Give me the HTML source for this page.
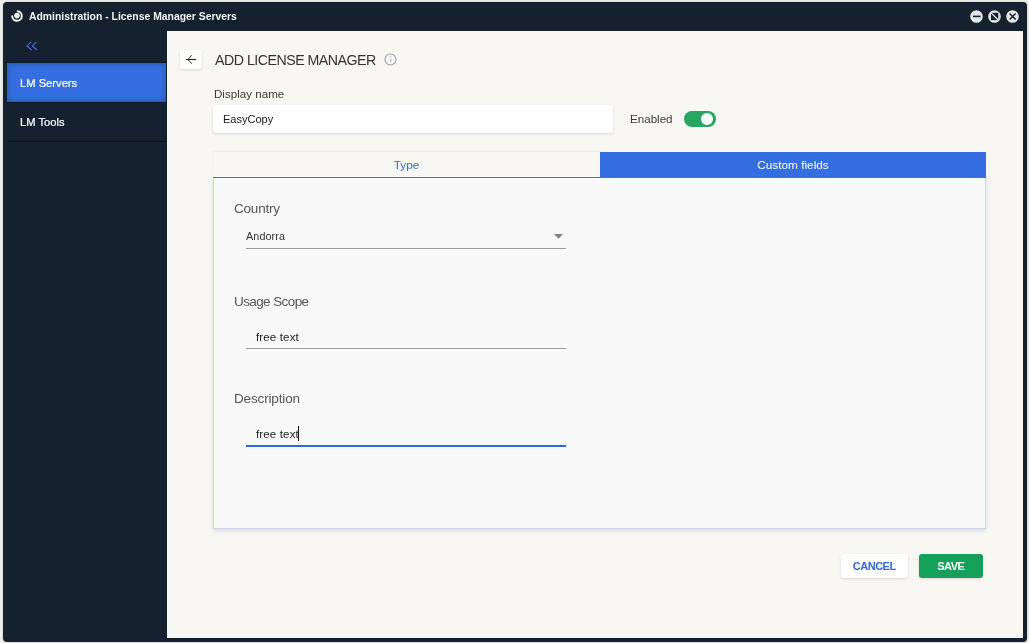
<!DOCTYPE html>
<html><head><meta charset="utf-8">
<style>
*{box-sizing:border-box;margin:0;padding:0}
body{will-change:transform}
html,body{width:1029px;height:643px;overflow:hidden;background:#f3f1ed;font-family:"Liberation Sans",sans-serif}
.abs{position:absolute}
.win{position:absolute;left:3px;top:2px;width:1023.6px;height:639.6px;background:#15212e;border-radius:4px;box-shadow:0 0 3px rgba(0,0,0,.22)}
.title{position:absolute;left:26px;top:9px;color:#f2f2f2;font-weight:bold;font-size:10.4px;line-height:12px;white-space:nowrap}
.logo{position:absolute;left:6.8px;top:7.2px}
.wbtn{position:absolute;top:8px;width:13px;height:13px}
.content{position:absolute;left:167px;top:31px;width:856px;height:607px;background:#f8f7f4}
.sb-back{position:absolute;left:25.5px;top:41px}
.nav{position:absolute;left:7px;width:159px;height:39px;color:#fff;font-size:11.2px;padding-left:13px;line-height:41px;-webkit-text-stroke:0.2px #fff}
.nav.active{top:63px;background:#356ee0;box-shadow:inset 0 0 6px rgba(0,0,0,.28), 0 -1px 0 #0e1620, 0 1px 0 #0e1620}
.nav.t2{top:102px}
.sep{position:absolute;left:7px;top:141px;width:159px;height:1px;background:#121416}
.backbtn{position:absolute;left:180px;top:50px;width:22px;height:19px;background:#fff;border-radius:2px;box-shadow:0 1px 3px rgba(0,0,0,.13)}
.h1{position:absolute;left:215px;top:51.5px;font-size:14.2px;letter-spacing:-0.5px;line-height:17px;color:#333;white-space:nowrap}
.lbl{position:absolute;font-size:11.6px;line-height:14px;color:#3a3a3a;white-space:nowrap}
.input{position:absolute;left:213px;top:105px;width:400px;height:28px;background:#fff;border-radius:3px;box-shadow:0 1px 3px rgba(0,0,0,.12)}
.toggle{position:absolute;left:684px;top:111px;width:32px;height:16px;border-radius:8px;background:#29a562}
.knob{position:absolute;left:17.2px;top:2px;width:12px;height:12px;border-radius:50%;background:#fff}
.tabs{position:absolute;left:213px;top:152px;width:773px;height:26px}
.tab1{position:absolute;left:0;top:0;width:387px;height:25px;background:#f8f7f3;color:#3169d9;font-size:11.8px;line-height:27px;text-align:center;box-shadow:0 -1px 2px rgba(0,0,0,.05)}
.tab2{position:absolute;left:387px;top:0;width:386px;height:25px;background:#346ee0;color:#fff;font-size:11.8px;line-height:27px;text-align:center}
.tabline{position:absolute;left:0;top:25px;width:773px;height:1px;background:#3b72e0}
.panel{position:absolute;left:213px;top:178px;width:773px;height:351px;background:#f9f9f9;border:1px solid #c9d7f5;border-top:none;box-shadow:0 2px 4px rgba(0,0,0,.12)}
.flabel{position:absolute;left:234px;font-size:13.5px;line-height:16px;color:#555;white-space:nowrap}
.fval{position:absolute;font-size:11.5px;line-height:14px;color:#222;white-space:nowrap}
.uline{position:absolute;left:246px;width:320px;height:1px;background:#9a9a9a}
.btn{position:absolute;top:554px;height:24px;border-radius:3px;font-weight:bold;font-size:11px;line-height:25px;text-align:center;letter-spacing:-0.5px;text-indent:-0.5px}
.cancel{left:841px;width:67px;background:#fff;color:#3169d9;box-shadow:0 1px 3px rgba(0,0,0,.12)}
.save{left:919px;width:64px;background:#14a05a;color:#fff;box-shadow:0 1px 3px rgba(0,0,0,.12)}
</style></head><body>
<div class="win">
  <svg class="logo" width="14" height="14" viewBox="0 0 14 14">
    <path d="M2.2 7.3 A4.8 4.8 0 1 0 7.8 2.3" fill="none" stroke="#f2f2f2" stroke-width="2" stroke-linecap="round"/>
    <circle cx="7" cy="6.6" r="2.8" fill="#f2f2f2"/>
  </svg>
  <div class="title">Administration - License Manager Servers</div>
  <svg class="wbtn" style="left:967px" viewBox="0 0 13 13"><circle cx="6.5" cy="6.5" r="6.3" fill="#e4e5e7"/><rect x="3" y="5.6" width="7.6" height="1.6" fill="#15212e"/></svg>
  <svg class="wbtn" style="left:985px" viewBox="0 0 13 13"><circle cx="6.5" cy="6.5" r="6.3" fill="#e4e5e7"/><rect x="3" y="2.8" width="7.3" height="7.3" fill="#15212e"/><path d="M2.6 2.4 L10.7 10.5" stroke="#e4e5e7" stroke-width="1.3"/></svg>
  <svg class="wbtn" style="left:1003px" viewBox="0 0 13 13"><circle cx="6.5" cy="6.5" r="6.3" fill="#e4e5e7"/><path d="M3.6 3.5 L9.6 9.5 M9.6 3.5 L3.6 9.5" stroke="#15212e" stroke-width="1.5"/></svg>
</div>
<svg class="sb-back" width="13" height="10" viewBox="0 0 13 10"><path d="M5.2 0.9 L1 4.9 L5.6 9 M10.4 0.9 L6.4 4.9 L11 9" fill="none" stroke="#3b70e0" stroke-width="1.2"/></svg>
<div class="nav active">LM Servers</div>
<div class="nav t2">LM Tools</div>
<div class="sep"></div>
<div class="content"></div>

<div class="backbtn"><svg width="22" height="19" viewBox="0 0 22 19"><path d="M16.2 9.5 H6" fill="none" stroke="#1e1e1e" stroke-width="1.1"/><path d="M11.7 5.2 L8 9.5 L11.7 13.8" fill="none" stroke="#1e1e1e" stroke-width="0.9"/></svg></div>
<div class="h1">ADD LICENSE MANAGER</div>
<svg class="abs" style="left:383.8px;top:52.9px" width="13" height="13" viewBox="0 0 13 13"><circle cx="6.5" cy="6.5" r="5.5" fill="none" stroke="#99a1ae" stroke-width="1.1"/><rect x="6" y="6.1" width="1.2" height="3.2" fill="#b0b6c0"/><rect x="6" y="3.3" width="1.2" height="1.4" fill="#b8bdc6"/></svg>
<div class="lbl" style="left:214px;top:87px">Display name</div>
<div class="input"></div>
<div class="fval" style="left:223px;top:112px;font-size:11px;color:#1a1a1a">EasyCopy</div>
<div class="lbl" style="left:630px;top:112px">Enabled</div>
<div class="toggle"><div class="knob"></div></div>

<div class="panel"></div>
<div class="tabs">
  <div class="tab1">Type</div>
  <div class="tab2">Custom fields</div>
  <div class="tabline"></div>
</div>

<div class="flabel" style="top:200.5px;letter-spacing:-0.2px">Country</div>
<div class="fval" style="left:246px;top:228.8px;font-size:10.8px;color:#333;letter-spacing:0.1px">Andorra</div>
<svg class="abs" style="left:554px;top:233.5px" width="9" height="5" viewBox="0 0 9 5"><path d="M0 0 H9 L4.5 4.8 Z" fill="#808080"/></svg>
<div class="uline" style="top:248px"></div>

<div class="flabel" style="top:293.5px;letter-spacing:-0.6px">Usage Scope</div>
<div class="fval" style="left:256px;top:330px;letter-spacing:0.15px">free text</div>
<div class="uline" style="top:348px"></div>

<div class="flabel" style="top:391px;letter-spacing:-0.15px">Description</div>
<div class="fval" style="left:256px;top:427px;letter-spacing:0.15px">free text</div>
<div class="abs" style="left:298px;top:426px;width:1px;height:15px;background:#111"></div>
<div class="uline" style="top:445px;height:2px;background:#3169d9"></div>

<div class="btn cancel">CANCEL</div>
<div class="btn save">SAVE</div>
</body></html>
